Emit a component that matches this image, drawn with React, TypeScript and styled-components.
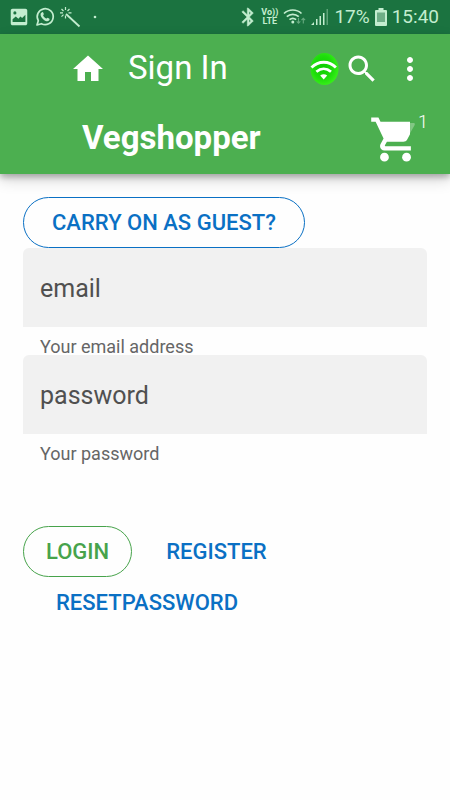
import React from "react";
import styled, { createGlobalStyle } from "styled-components";

const GlobalStyle = createGlobalStyle`
  * { box-sizing: border-box; }
  body { margin: 0; background: #fefefe; font-family: Roboto, "Liberation Sans", sans-serif; }
`;

const StatusBar = styled.div`
  display: flex;
  justify-content: space-between;
  align-items: center;
  height: 34px;
  padding: 0 11px 0 8px;
  background: #1b7340;
  color: #c3edcf;
`;

const StatusGroup = styled.div`
  display: flex;
  align-items: center;
  gap: 5px;
  font-size: 19px;
  line-height: 24px;
`;

const NetworkLabel = styled.span`
  display: flex;
  flex-direction: column;
  align-items: center;
  font-size: 9px;
  line-height: 9px;
  font-weight: 700;
`;

const Header = styled.header`
  position: relative;
  background: #4caf50;
  color: #fff;
  box-shadow: 0 3px 6px rgba(0, 0, 0, 0.26), 0 6px 14px rgba(0, 0, 0, 0.16);
`;

const HeaderRow = styled.div`
  display: flex;
  align-items: center;
  justify-content: space-between;
  height: 70px;
`;

const Lead = styled.div`
  display: flex;
  align-items: center;
  gap: 22px;
  padding-left: 70px;
`;

const Tools = styled.div`
  display: flex;
  align-items: center;
  padding-right: 22px;
`;

const IconButton = styled.button<{ $space?: number }>`
  display: flex;
  padding: 0;
  margin: 0 0 0 ${(p) => p.$space ?? 0}px;
  border: 0;
  background: none;
  color: inherit;
  font-family: inherit;
  cursor: pointer;
`;

const Title = styled.h1`
  margin: 0;
  padding-bottom: 2px;
  font-size: 33px;
  line-height: 40px;
  font-weight: 400;
`;

const Brand = styled.h2`
  margin: 0;
  padding: 0 0 2px 82px;
  font-size: 33px;
  line-height: 40px;
  font-weight: 700;
`;

const CartButton = styled(IconButton)`
  align-items: flex-start;
  padding-right: 22px;
`;

const CartCount = styled.span`
  margin-left: -4px;
  font-size: 18px;
  line-height: 18px;
  font-weight: 300;
`;

const Form = styled.form`
  display: flex;
  flex-direction: column;
  align-items: flex-start;
  padding: 23px;
`;

const Button = styled.button<{ $tone?: string; $outlined?: boolean; $pad: number }>`
  height: 51px;
  padding: 0 ${(p) => p.$pad}px;
  border: 1px solid ${(p) => (p.$outlined ? "currentColor" : "transparent")};
  border-radius: 26px;
  background: none;
  color: ${(p) => p.$tone ?? "#0a70c4"};
  font-family: inherit;
  font-size: 22px;
  line-height: 28px;
  font-weight: 500;
  text-transform: uppercase;
  white-space: nowrap;
  cursor: pointer;
`;

const Field = styled.div`
  width: 100%;
`;

const Input = styled.input`
  display: block;
  width: 100%;
  height: 79px;
  padding: 2px 17px 0;
  border: 0;
  border-radius: 6px 6px 0 0;
  background: #f1f1f1;
  color: #505050;
  font-family: inherit;
  font-size: 25px;
  outline: none;
  &::placeholder { color: #505050; opacity: 1; }
`;

const Helper = styled.p`
  margin: 0;
  padding: 6px 17px 0;
  height: 28px;
  color: #666;
  font-size: 18px;
  line-height: 28px;
`;

const Actions = styled.div`
  display: flex;
  flex-wrap: wrap;
  column-gap: 10px;
  margin-top: 64px;
`;

const paths = {
  home: "M10 20v-6h4v6h5v-8h3L12 3 2 12h3v8z",
  search:
    "M15.5 14h-.79l-.28-.27C15.41 12.59 16 11.11 16 9.5 16 5.91 13.09 3 9.5 3S3 5.91 3 9.5 5.91 16 9.5 16c1.61 0 3.09-.59 4.23-1.57l.27.28v.79l5 4.99L20.49 19l-4.99-5zm-6 0C7.01 14 5 11.99 5 9.5S7.01 5 9.5 5 14 7.01 14 9.5 11.99 14 9.5 14z",
  more: "M12 8c1.1 0 2-.9 2-2s-.9-2-2-2-2 .9-2 2 .9 2 2 2zm0 2c-1.1 0-2 .9-2 2s.9 2 2 2 2-.9 2-2-.9-2-2-2zm0 6c-1.1 0-2 .9-2 2s.9 2 2 2 2-.9 2-2-.9-2-2-2z",
  image:
    "M21 19V5c0-1.100-.9-2-2-2H5c-1.100 0-2 .9-2 2v14c0 1.100.9 2 2 2h14c1.100 0 2-.9 2-2zM7.500 5.800a1.700 1.700 0 1 1 0 3.400 1.700 1.700 0 0 1 0-3.400zM5 17.500v-3l3.500-3 2.800 2.300 2.300-2.300 1.800 1.500L19 9.500v8z",
  bluetooth:
    "M17.710 7.710L12 2h-1v7.590L6.410 5 5 6.410 10.590 12 5 17.590 6.410 19 11 14.410V22h1l5.710-5.710-4.300-4.290 4.300-4.290zM13 5.830l1.880 1.880L13 9.590V5.830zm1.880 10.460L13 18.170v-3.760l1.880 1.880z",
};

const Icon = ({ d, size }: { d: string; size: number }) => (
  <svg width={size} height={size} viewBox="0 0 24 24" fill="currentColor" aria-hidden="true">
    <path d={d} fillRule="evenodd" />
  </svg>
);

const BluetoothIcon = () => (
  <svg width="16" height="20" viewBox="3 1 17.600 22" fill="currentColor" stroke="currentColor" strokeWidth=".5" aria-hidden="true">
    <path d={paths.bluetooth} fillRule="evenodd" />
  </svg>
);

const WhatsAppIcon = () => (
  <svg width="20" height="20" viewBox="0 0 20 20" fill="none" aria-hidden="true">
    <path d="M2 18l1.300-4.300a8 8 0 1 1 3.100 3z" stroke="currentColor" strokeWidth="1.700" strokeLinejoin="round" />
    <path
      d="M7 5.200c.5-.3 1-.1 1.200.4l.6 1.500c.1.500-.7 1.100-.7 1.500.7 1.400 1.700 2.400 3.100 3 .5 0 1-.9 1.500-.8l1.700.9c.4.300.1 1.400-.4 1.900-1.200 1.100-3.200.7-5.300-.9-2.200-1.700-3.500-4.100-3.100-5.900.2-.7.7-1.300 1.400-1.600z"
      fill="currentColor"
    />
  </svg>
);

const WandIcon = () => (
  <svg width="21" height="21" viewBox="0 0 21 21" fill="none" stroke="currentColor" aria-hidden="true">
    <path d="M6 7l13.500 12.500" strokeWidth="1.800" />
    <path d="M5.500 0v3M5.500 8.500v3M0 5.800h3M8.500 5.800h3M1.500 2l2 2M9.500 2l-2 2M1.500 9.700l2-2" strokeWidth="1.200" />
  </svg>
);

const DotIcon = () => (
  <svg width="20" height="20" viewBox="0 0 20 20" fill="currentColor" aria-hidden="true">
    <circle cx="9" cy="10" r="1.300" />
  </svg>
);

const StatusWifi = () => (
  <svg width="23" height="18" viewBox="0 0 23 18" fill="none" stroke="currentColor" aria-hidden="true">
    <path d="M1 5.500c5-4.700 12.500-4.700 17.500 0M3.800 8.700c3.500-3.200 8.400-3.200 12 0M6.500 11.700c2-1.700 4.600-1.700 6.600 0" strokeWidth="1.700" />
    <circle cx="9.800" cy="14" r="1.500" fill="currentColor" stroke="none" />
    <path d="M15.500 10v5M13.700 13.300l1.800 2 1.800-2M20.300 15.500v-5M18.500 12.200l1.800-2 1.800 2" strokeWidth="1.100" opacity=".45" />
  </svg>
);

const SignalIcon = () => (
  <svg width="18" height="18" viewBox="0 0 18 18" fill="currentColor" aria-hidden="true">
    <path d="M0 17l3-3v3zM5 11h1.500v6H5zM8.500 8H10v9H8.500zM12 5h1.500v12H12z" />
    <path d="M15.500 1H17v16h-1.500z" opacity=".4" />
  </svg>
);

const BatteryIcon = () => (
  <svg width="12" height="18" viewBox="0 0 12 18" fill="currentColor" aria-hidden="true">
    <path d="M3.500 0h5v2H11q1 0 1 1v14q0 1-1 1H1q-1 0-1-1V3q0-1 1-1h2.500z" />
    <path d="M2 4.500h8V14H2z" fill="#6fae87" />
  </svg>
);

const OnlineIcon = () => (
  <svg width="30" height="34" viewBox="0 0 30 34" fill="none" aria-hidden="true">
    <defs>
      <radialGradient id="online" cx=".45" cy=".45" r=".6">
        <stop offset="0" stopColor="#0ccc00" />
        <stop offset="0.600" stopColor="#1fdd0c" />
        <stop offset="1" stopColor="#3cf21c" />
      </radialGradient>
    </defs>
    <ellipse cx="15.500" cy="17" rx="14" ry="16" fill="url(#online)" />
    <g stroke="#fff" strokeWidth="2.800">
      <path d="M2.500 15.500c7-7 17.600-7 24.400 0M7.400 19.700c4.500-3.800 10.100-3.800 14.600 0" />
    </g>
    <path d="M11.200 23.500q3.500-2.600 7 0l-3.500 4z" fill="#fff" />
  </svg>
);

const CartIcon = () => (
  <svg width="53" height="53" viewBox="0 0 24 24" fill="currentColor" aria-hidden="true">
    <defs>
      <clipPath id="basket">
        <path d="M0 0h18.600v24H0z" />
      </clipPath>
    </defs>
    <path
      clipPath="url(#basket)"
      d="M7 18c-1.100 0-1.990.9-1.990 2S5.900 22 7 22s2-.9 2-2-.9-2-2-2zM1 2v2h2l3.600 7.590-1.350 2.450c-.16.280-.25.610-.25.960 0 1.100.9 2 2 2h12v-2H7.420c-.14 0-.25-.11-.25-.25l.03-.12.9-1.630h7.450c.75 0 1.410-.41 1.750-1.030l3.580-6.490c.08-.14.12-.31.12-.48 0-.55-.45-1-1-1H5.210l-.94-2H1z"
    />
    <circle cx="17" cy="20" r="2" />
    <path d="M18.600 15H19v2h-.4z" />
    <path d="M18.600 4.500h1.800q.6.300.3.900L18.600 9.200z" opacity=".3" />
  </svg>
);

type FieldProps = { name: string; type: string; helper: string };

const TextField = ({ name, type, helper }: FieldProps) => (
  <Field>
    <Input id={name} name={name} type={type} placeholder={name} aria-label={name} aria-describedby={`${name}-helper`} />
    <Helper id={`${name}-helper`}>{helper}</Helper>
  </Field>
);

export default function App() {
  return (
    <>
      <GlobalStyle />
      <StatusBar>
        <StatusGroup>
          <Icon d={paths.image} size={22} />
          <WhatsAppIcon />
          <WandIcon />
          <DotIcon />
        </StatusGroup>
        <StatusGroup>
          <BluetoothIcon />
          <NetworkLabel>
            <span>Vo))</span>
            <span>LTE</span>
          </NetworkLabel>
          <StatusWifi />
          <SignalIcon />
          <span>17%</span>
          <BatteryIcon />
          <span>15:40</span>
        </StatusGroup>
      </StatusBar>
      <Header>
        <HeaderRow>
          <Lead>
            <IconButton aria-label="Home">
              <Icon d={paths.home} size={36} />
            </IconButton>
            <Title>Sign In</Title>
          </Lead>
          <Tools>
            <OnlineIcon />
            <IconButton aria-label="Search" $space={5}>
              <Icon d={paths.search} size={36} />
            </IconButton>
            <IconButton aria-label="More options" $space={12}>
              <Icon d={paths.more} size={36} />
            </IconButton>
          </Tools>
        </HeaderRow>
        <HeaderRow>
          <Brand>Vegshopper</Brand>
          <CartButton aria-label="Cart, 1 item">
            <CartIcon />
            <CartCount>1</CartCount>
          </CartButton>
        </HeaderRow>
      </Header>
      <Form onSubmit={(e) => e.preventDefault()}>
        <Button type="button" $outlined $pad={28}>Carry on as guest?</Button>
        <TextField name="email" type="email" helper="Your email address" />
        <TextField name="password" type="password" helper="Your password" />
        <Actions>
          <Button type="submit" $outlined $tone="#47a34b" $pad={22}>Login</Button>
          <Button type="button" $pad={23}>Register</Button>
          <Button type="button" $pad={32}>ResetPassword</Button>
        </Actions>
      </Form>
    </>
  );
}
